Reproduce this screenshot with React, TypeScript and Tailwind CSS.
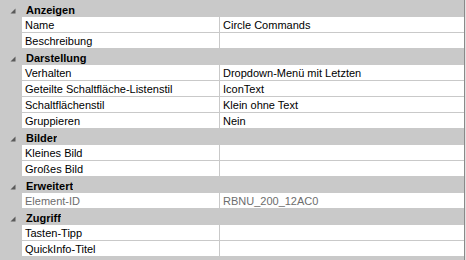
import React from "react"

type Item = { label: string; value?: string; readOnly?: boolean }
type Category = { title: string; items: Item[] }

const categories: Category[] = [
  {
    title: "Anzeigen",
    items: [{ label: "Name", value: "Circle Commands" }, { label: "Beschreibung" }]
  },
  {
    title: "Darstellung",
    items: [
      { label: "Verhalten", value: "Dropdown-Menü mit Letzten" },
      { label: "Geteilte Schaltfläche-Listenstil", value: "IconText" },
      { label: "Schaltflächenstil", value: "Klein ohne Text" },
      { label: "Gruppieren", value: "Nein" }
    ]
  },
  {
    title: "Bilder",
    items: [{ label: "Kleines Bild" }, { label: "Großes Bild" }]
  },
  {
    title: "Erweitert",
    items: [{ label: "Element-ID", value: "RBNU_200_12AC0", readOnly: true }]
  },
  {
    title: "Zugriff",
    items: [{ label: "Tasten-Tipp" }, { label: "QuickInfo-Titel" }]
  }
]

// expanded-state triangle, like the WinForms property grid
const ExpandedGlyph = () => (
  <svg width="6" height="6" viewBox="0 0 6 6" className="block">
    <polygon points="5.5,0.5 5.5,5.5 0.5,5.5" fill="#5a5a5a" />
  </svg>
)

const CategoryRow: React.FC<{ title: string }> = ({ title }) => (
  <div className="flex h-[16px] items-center">
    <div className="flex w-[22px] shrink-0 justify-end pr-[6px] pt-[3px]">
      <ExpandedGlyph />
    </div>
    <span className="h-[16px] overflow-hidden pl-[4px] text-[11px] leading-[18px] font-bold text-black">{title}</span>
  </div>
)

const PropertyRow: React.FC<{ item: Item }> = ({ item }) => {
  const color = item.readOnly ? "text-[#6d6d6d]" : "text-black"
  return (
    <div className="flex h-[16px] pl-[22px]">
      <div className={`h-[15px] w-[197px] shrink-0 bg-white pl-[3px] text-[11px] leading-[17px] whitespace-nowrap overflow-hidden ${color}`}>
        {item.label}
      </div>
      <div className={`ml-px h-[15px] flex-1 bg-white pl-[3px] text-[11px] leading-[17px] whitespace-nowrap overflow-hidden ${color}`}>
        {item.value ?? ""}
      </div>
    </div>
  )
}

export default function App() {
  return (
    <div
      className="flex h-[260px] w-[466px] bg-[#c9c9c9]"
      style={{ fontFamily: '"Liberation Sans", Arial, sans-serif' }}
    >
      <div className="flex w-[464px] flex-col pt-px">
        {categories.map((cat) => (
          <div key={cat.title} className="flex flex-col">
            <CategoryRow title={cat.title} />
            {cat.items.map((item) => (
              <PropertyRow key={item.label} item={item} />
            ))}
          </div>
        ))}
      </div>
      <div className="w-px bg-[#8a8a8a]" />
      <div className="w-px bg-[#e3e3e3]" />
    </div>
  )
}
